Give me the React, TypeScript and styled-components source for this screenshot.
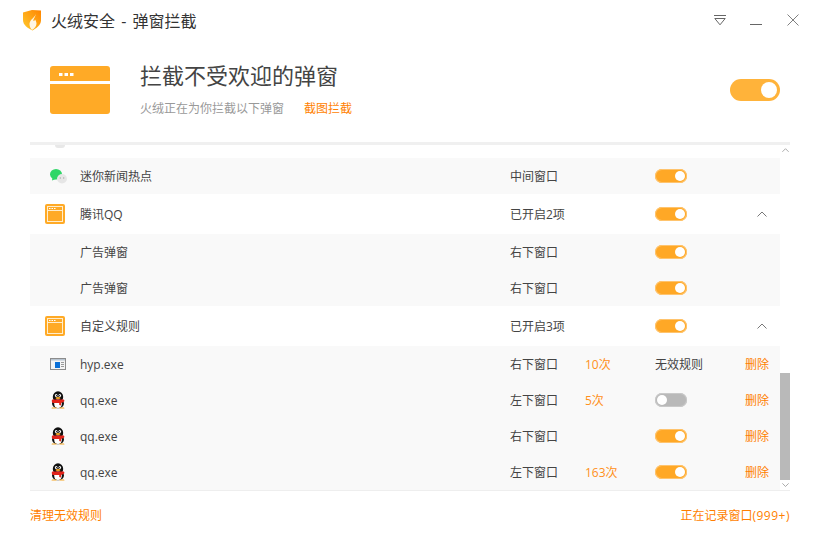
import { createGlobalStyle, styled } from "styled-components";

const GlobalStyle = createGlobalStyle`
  html, body {
    margin: 0;
    padding: 0;
    background: #fff;
  }
  body {
    font-family: "Open Sans", "Noto Sans CJK SC", "Liberation Sans", sans-serif;
    font-size: 12px;
    color: #444;
  }
`;

const Page = styled.div`
  width: 820px;
  height: 540px;
  display: flex;
  flex-direction: column;
  overflow: hidden;
  background: #fff;
`;

const TitleBar = styled.header`
  height: 40px;
  display: flex;
  align-items: center;
  padding-left: 22px;
`;

const TitleText = styled.div`
  margin-left: 9px;
  font-size: 16px;
  word-spacing: 2px;
  color: #333;
  flex: 1;
`;

const WindowButtons = styled.div`
  display: flex;
  align-items: center;
  gap: 24px;
  padding-right: 21px;
`;

const Hero = styled.section`
  height: 102px;
  display: flex;
  align-items: center;
  padding: 0 40px 2px 50px;
  box-sizing: border-box;
`;

const HeroText = styled.div`
  margin-left: 30px;
  margin-bottom: 3px;
  flex: 1;
`;

const Heading = styled.h1`
  margin: 0;
  font-size: 22px;
  font-weight: 400;
  line-height: 32px;
  color: #444;
`;

const SubLine = styled.div`
  margin-top: 9px;
  display: flex;
  gap: 20px;
  line-height: 18px;
  color: #999;
`;

const OrangeText = styled.span`
  color: #ff7f00;
`;

const ListArea = styled.div`
  margin-left: 30px;
  width: 760px;
  height: 349px;
  border-top: 3px solid #f0f0f0;
  border-bottom: 1px solid #eee;
  box-sizing: border-box;
  display: flex;
`;

const Rows = styled.div`
  flex: 1;
  overflow: hidden;
`;

const Peek = styled.div`
  height: 13px;
  padding-left: 25px;
  background: #fff;

  &::before {
    content: "";
    display: block;
    width: 10px;
    height: 3px;
    background: #e8e8e8;
    border-radius: 0 0 3px 3px;
  }
`;

const Row = styled.div<{ $parent?: boolean }>`
  height: ${(p) => (p.$parent ? "40px" : "36px")};
  display: grid;
  grid-template-columns: 50px 430px 75px 70px 90px 35px;
  align-items: center;
  background: ${(p) => (p.$parent ? "#fff" : "#f9f9f9")};
  color: #444;
  line-height: 18px;
`;

const IconCell = styled.div<{ $parent?: boolean }>`
  display: flex;
  justify-content: center;
  padding-left: ${(p) => (p.$parent ? "0" : "6px")};
  box-sizing: border-box;
`;

const TextCell = styled.div`
  padding-top: 2px;
`;

const Count = styled(TextCell)`
  color: #ff9020;
`;

const Remove = styled(TextCell)`
  color: #ff7f00;
`;

const ChevronCell = styled.div`
  display: flex;
  padding-left: 12px;
`;

const Track = styled.div<{ $on: boolean; $big?: boolean }>`
  width: ${(p) => (p.$big ? "50px" : "32px")};
  height: ${(p) => (p.$big ? "22px" : "14px")};
  box-sizing: border-box;
  border-radius: 11px;
  display: flex;
  align-items: center;
  justify-content: ${(p) => (p.$on ? "flex-end" : "flex-start")};
  padding: 0 ${(p) => (p.$big ? "3px" : "2px")};
  background: ${(p) => (p.$on ? (p.$big ? "#ffb33a" : "#ffa826") : "#b9b9b9")};
  box-shadow: ${(p) =>
    p.$big ? "none" : `inset 0 0 0 1px ${p.$on ? "#ffc46e" : "#c9c9c9"}`};
`;

const Knob = styled.div<{ $big?: boolean }>`
  width: ${(p) => (p.$big ? "16px" : "10px")};
  height: ${(p) => (p.$big ? "16px" : "10px")};
  border-radius: 50%;
  background: #fff;
`;

const ScrollBar = styled.div`
  width: 10px;
  display: flex;
  flex-direction: column;
  background: #fff;
`;

const ScrollArrow = styled.div<{ $h: number }>`
  height: ${(p) => p.$h}px;
  display: flex;
  align-items: center;
  justify-content: center;
`;

const ScrollGap = styled.div`
  flex: 1;
`;

const ScrollThumb = styled.div`
  height: 107px;
  background: #b9b9b9;
`;

const Footer = styled.footer`
  display: flex;
  justify-content: space-between;
  align-items: center;
  margin: 0 30px;
  height: 47px;
  color: #ff7f00;
`;

const RecordCount = styled.span`
  letter-spacing: 0.5px;
`;

function Switch({ on, big }: { on: boolean; big?: boolean }) {
  return (
    <Track $on={on} $big={big}>
      <Knob $big={big} />
    </Track>
  );
}

function ShieldLogo() {
  return (
    <svg width="20" height="22" viewBox="0 0 20 22">
      <defs>
        <linearGradient id="shieldFill" x1="0" y1="1" x2="1" y2="0">
          <stop offset="0" stopColor="#ffcb2e" />
          <stop offset="1" stopColor="#ff8400" />
        </linearGradient>
      </defs>
      <path d="M1 3.500 10 1l9 .5v10c0 4.500-4.500 7.500-8.500 10C5.500 19 1 16 1 11z" fill="url(#shieldFill)" />
      <path d="M13.500 4.500c.5 3.500-5.500 5.500-6 10-.2 2.500 1 5 2.500 6.500 2.500-1.500 4.500-3.500 4.500-6.500 0-1.500-.8-3-1.500-4-.3 1-1 1.500-1.500 1.500-.5-2.500 2.500-4 2-7.500z" fill="#fff6e6" />
    </svg>
  );
}

function MenuIcon() {
  return (
    <svg width="12" height="11" viewBox="0 0 12 11" fill="none" stroke="#666" strokeWidth="1">
      <path d="M0 .5h12" />
      <path d="M.8 3.500h10.400L6 9.800z" />
    </svg>
  );
}

function MinimizeIcon() {
  return (
    <svg width="13" height="12" viewBox="0 0 13 12" fill="none" stroke="#666" strokeWidth="1">
      <path d="M0 10.500h12" />
    </svg>
  );
}

function CloseIcon() {
  return (
    <svg width="12" height="12" viewBox="0 0 12 12" fill="none" stroke="#808080" strokeWidth="1">
      <path d="M.5.500l11 11M11.500.500l-11 11" />
    </svg>
  );
}

function WindowIcon({ size }: { size: "hero" | "row" }) {
  if (size === "hero") {
    return (
      <svg width="60" height="48" viewBox="0 0 60 48">
        <path d="M3 0h54a3 3 0 0 1 3 3v12H0V3a3 3 0 0 1 3-3z" fill="#ffaa26" />
        <path d="M0 18h60v27a3 3 0 0 1-3 3H3a3 3 0 0 1-3-3z" fill="#ffaa26" />
        <path d="M9 7h3.500v3H9zM14.500 7H18v3h-3.500zM20 7h3.500v3H20z" fill="#fff" />
      </svg>
    );
  }
  return (
    <svg width="20" height="20" viewBox="0 0 20 20">
      <rect width="20" height="20" rx="2" fill="#ffaa26" />
      <rect x="2.500" y="2.500" width="15" height="15" fill="none" stroke="#ffedcc" strokeWidth="1" />
      <path d="M2 6.500h16" stroke="#ffedcc" strokeWidth="1" />
      <path d="M4 4h1.500v1H4zM6.500 4H8v1H6.500zM9 4h1.500v1H9z" fill="#fff" />
    </svg>
  );
}

function WeChatIcon() {
  return (
    <svg width="17" height="15" viewBox="0 0 17 15">
      <ellipse cx="6" cy="5.300" rx="6" ry="5.200" fill="#2fd667" />
      <path d="M2.500 8.500l-.5 3L6 10z" fill="#2fd667" />
      <ellipse cx="12" cy="9.800" rx="5" ry="4.700" fill="#e6e6e6" />
      <circle cx="10.300" cy="9" r=".7" fill="#aaa" />
      <circle cx="13.700" cy="9" r=".7" fill="#aaa" />
    </svg>
  );
}

function ExeIcon() {
  return (
    <svg width="16" height="12" viewBox="0 0 16 12">
      <rect x=".5" y=".5" width="15" height="11" fill="#f4f4f4" stroke="#8c8c8c" />
      <path d="M1 1h14v1.500H1z" fill="#b8c4d0" />
      <rect x="5" y="4" width="5" height="6" fill="#0a6fd6" />
      <path d="M11 4.500h3M11 6.500h3M11 8.500h3" stroke="#9a9a9a" strokeWidth="1" />
    </svg>
  );
}

function PenguinIcon() {
  return (
    <svg width="16" height="18" viewBox="0 0 16 18">
      <ellipse cx="8" cy="6" rx="5.200" ry="5.800" fill="#111" />
      <ellipse cx="8" cy="12.500" rx="6" ry="4.800" fill="#111" />
      <ellipse cx="8" cy="12.800" rx="3.800" ry="4.200" fill="#fff" />
      <ellipse cx="6.200" cy="4.500" rx="1.300" ry="1.600" fill="#fff" />
      <ellipse cx="9.800" cy="4.500" rx="1.300" ry="1.600" fill="#fff" />
      <circle cx="6.500" cy="4.700" r=".6" fill="#111" />
      <circle cx="9.500" cy="4.700" r=".6" fill="#111" />
      <ellipse cx="8" cy="7" rx="2.500" ry="1" fill="#f5a623" />
      <path d="M2.500 8.500h11c.8 0 1.200 1.500.5 2.200L11 12v2.500l-1.800-.5V12H3c-1.500-.5-1.500-3.500-.5-3.500z" fill="#e2231a" />
      <path d="M2 16.500h4.500v1H1.500zM9.500 16.500H14l.5 1H9.500z" fill="#f5a623" />
    </svg>
  );
}

function Chevron({ dir, color, size }: { dir: "up" | "down"; color: string; size: number }) {
  return (
    <svg width={size} height={size * 0.6} viewBox="0 0 10 6" fill="none" stroke={color} strokeWidth="1">
      <path d={dir === "up" ? "M.5 5.500 5 1l4.500 4.500" : "M.5.500 5 5 9.500.500"} />
    </svg>
  );
}

type RowData = {
  icon?: React.ReactNode;
  name: string;
  type: string;
  count?: string;
  on?: boolean;
  invalid?: boolean;
  remove?: boolean;
  parent?: boolean;
};

const rows: RowData[] = [
  { icon: <WeChatIcon />, name: "迷你新闻热点", type: "中间窗口", on: true },
  { icon: <WindowIcon size="row" />, name: "腾讯QQ", type: "已开启2项", on: true, parent: true },
  { name: "广告弹窗", type: "右下窗口", on: true },
  { name: "广告弹窗", type: "右下窗口", on: true },
  { icon: <WindowIcon size="row" />, name: "自定义规则", type: "已开启3项", on: true, parent: true },
  { icon: <ExeIcon />, name: "hyp.exe", type: "右下窗口", count: "10次", invalid: true, remove: true },
  { icon: <PenguinIcon />, name: "qq.exe", type: "左下窗口", count: "5次", on: false, remove: true },
  { icon: <PenguinIcon />, name: "qq.exe", type: "右下窗口", on: true, remove: true },
  { icon: <PenguinIcon />, name: "qq.exe", type: "左下窗口", count: "163次", on: true, remove: true },
];

export default function App() {
  return (
    <Page>
      <GlobalStyle />
      <TitleBar>
        <ShieldLogo />
        <TitleText>火绒安全 - 弹窗拦截</TitleText>
        <WindowButtons>
          <MenuIcon />
          <MinimizeIcon />
          <CloseIcon />
        </WindowButtons>
      </TitleBar>
      <Hero>
        <WindowIcon size="hero" />
        <HeroText>
          <Heading>拦截不受欢迎的弹窗</Heading>
          <SubLine>
            <span>火绒正在为你拦截以下弹窗</span>
            <OrangeText>截图拦截</OrangeText>
          </SubLine>
        </HeroText>
        <Switch on big />
      </Hero>
      <ListArea>
        <Rows>
          <Peek />
          {rows.map((row, i) => (
            <Row key={i} $parent={row.parent}>
              <IconCell $parent={row.parent}>{row.icon}</IconCell>
              <TextCell>{row.name}</TextCell>
              <TextCell>{row.type}</TextCell>
              <Count>{row.count}</Count>
              {row.invalid ? <TextCell>无效规则</TextCell> : <Switch on={!!row.on} />}
              {row.parent ? (
                <ChevronCell>
                  <Chevron dir="up" color="#777" size={10} />
                </ChevronCell>
              ) : (
                <Remove>{row.remove ? "删除" : ""}</Remove>
              )}
            </Row>
          ))}
        </Rows>
        <ScrollBar>
          <ScrollArrow $h={11}>
            <Chevron dir="up" color="#888" size={7} />
          </ScrollArrow>
          <ScrollGap />
          <ScrollThumb />
          <ScrollArrow $h={10}>
            <Chevron dir="down" color="#888" size={7} />
          </ScrollArrow>
        </ScrollBar>
      </ListArea>
      <Footer>
        <span>清理无效规则</span>
        <span>
          正在记录窗口<RecordCount>(999+)</RecordCount>
        </span>
      </Footer>
    </Page>
  );
}
